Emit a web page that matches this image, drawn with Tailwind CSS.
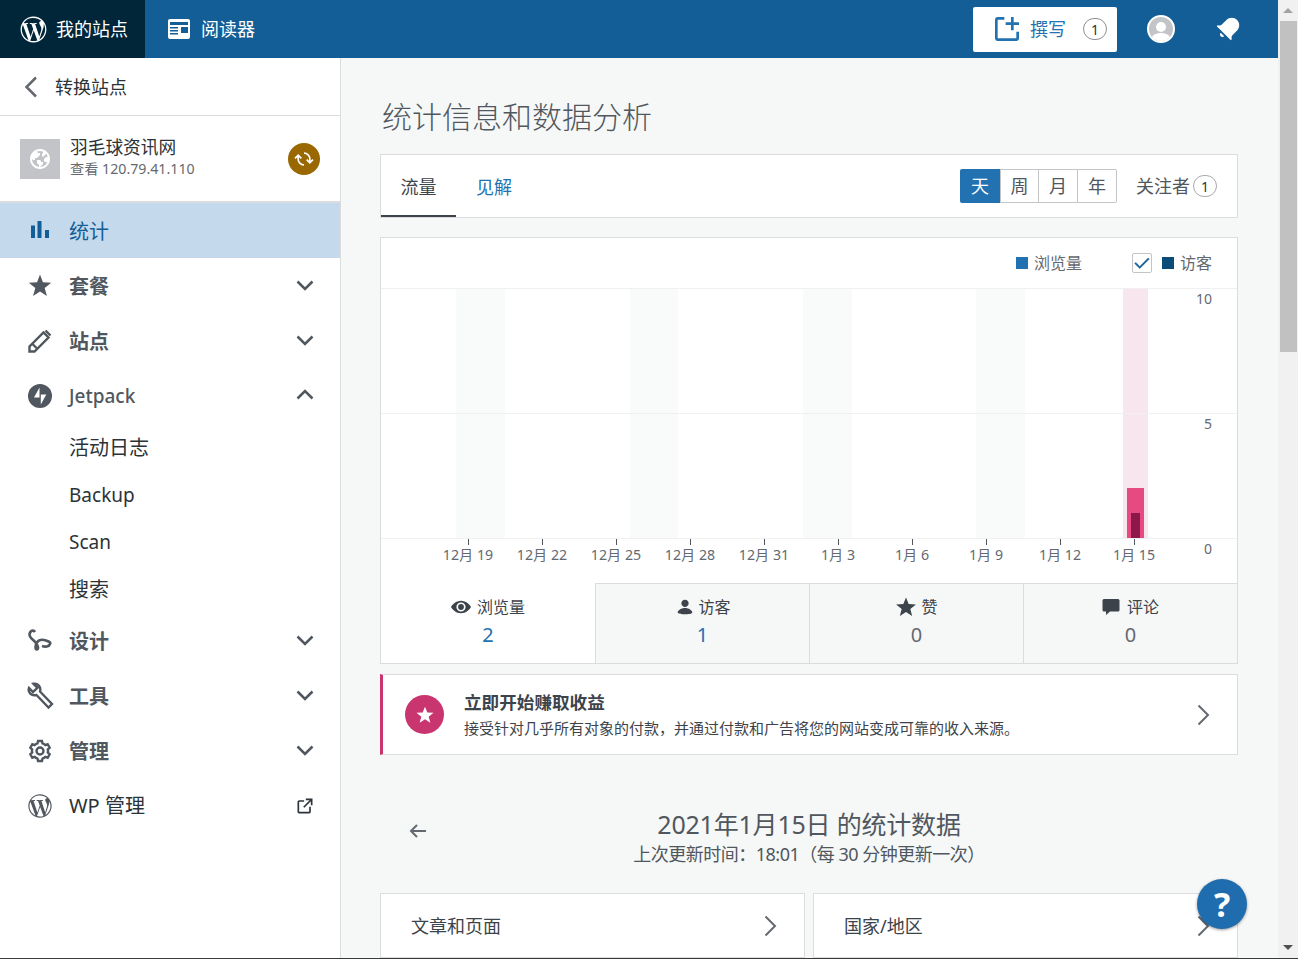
<!DOCTYPE html>
<html lang="zh">
<head>
    <meta charset="UTF-8">
    <title>统计信息和数据分析</title>
    <script src="https://cdn.jsdelivr.net/npm/@tailwindcss/browser@4"></script>
</head>
<body class="overflow-hidden bg-white">
<div class="relative flex h-[959px] w-[1298px] overflow-hidden border-b border-[#3a3a3a] font-['Noto_Sans','Noto_Sans_CJK_SC',sans-serif] text-[#2c3338]">
    <div class="flex w-[1278px] flex-col">
        <!-- Masterbar -->
        <header class="flex h-[58px] shrink-0 items-center bg-[#135e96] text-white">
            <div class="flex h-full w-[145px] items-center bg-[#01263a] pl-[18px] text-[18px]">
                <svg class="h-[31px] w-[31px] fill-white" viewBox="0 0 24 24"><path d="M12 2C6.477 2 2 6.477 2 12s4.477 10 10 10 10-4.477 10-10S17.523 2 12 2zM3.01 12c0-1.303.28-2.54.78-3.657l4.288 11.75C5.08 18.638 3.01 15.562 3.01 12zm8.99 8.99c-.883 0-1.735-.13-2.54-.366l2.698-7.84 2.763 7.57c.02.043.042.085.066.124-.934.328-1.94.51-2.987.51zm1.24-13.205c.54-.028 1.028-.085 1.028-.085.484-.058.427-.77-.057-.742 0 0-1.458.114-2.4.114-.885 0-2.37-.114-2.37-.114-.486-.028-.543.712-.058.74 0 0 .46.058.945.086l1.403 3.842-1.97 5.908-3.278-9.75c.543-.028 1.03-.085 1.03-.085.484-.058.427-.77-.058-.742 0 0-1.457.114-2.4.114-.17 0-.37-.004-.58-.01C6.2 3.96 8.947 3.01 12 3.01c2.34 0 4.472.895 6.07 2.36-.038-.002-.076-.007-.116-.007-.883 0-1.51.77-1.51 1.596 0 .74.428 1.368.883 2.108.343.6.743 1.37.743 2.482 0 .77-.298 1.666-.685 2.91l-.9 3.007-3.245-9.67zM16.52 19.73l2.75-7.95c.513-1.283.684-2.308.684-3.22 0-.33-.022-.637-.06-.924.703 1.283 1.105 2.755 1.105 4.322 0 3.33-1.803 6.237-4.482 7.772z"/></svg>
                <span class="ml-[7px]">我的站点</span>
            </div>
            <div class="flex h-full items-center pl-[23px] text-[18px]">
                <svg class="h-[20px] w-[22px]" viewBox="0 0 22 20"><rect width="22" height="20" rx="2" fill="#fff"/><rect x="2" y="3" width="18" height="3" fill="#135e96"/><rect x="2" y="8" width="8" height="1.5" fill="#135e96"/><rect x="2" y="11" width="8" height="1.5" fill="#135e96"/><rect x="2" y="14" width="8" height="1.5" fill="#135e96"/><rect x="13" y="8" width="7" height="6" fill="#135e96"/></svg>
                <span class="ml-[11px]">阅读器</span>
            </div>
            <div class="ml-auto flex h-[45px] w-[144px] items-center rounded-[2px] bg-white pl-[18px] text-[18px] text-[#2271b1]">
                <svg class="h-[32px] w-[32px] fill-[#2271b1]" viewBox="0 0 24 24"><path d="M21 14v5c0 1.105-.895 2-2 2H5c-1.105 0-2-.895-2-2V5c0-1.105.895-2 2-2h5v2H5v14h14v-5h2zM21 7h-4V3h-2v4h-4v2h4v4h2V9h4V7z"/></svg>
                <span class="ml-[7px]">撰写</span>
                <span class="ml-[17px] flex h-[22px] w-[24px] items-center justify-center rounded-full border border-[#8c8f94] text-[14px] text-[#2c3338]">1</span>
            </div>
            <div class="ml-[30px] flex h-[28px] w-[28px] items-end justify-center overflow-hidden rounded-full border-2 border-white bg-[#c3c4c7]">
                <svg class="h-[24px] w-[24px] fill-white" viewBox="0 0 24 24"><circle cx="12" cy="10" r="5"/><path d="M2 24c0-6 5-8 10-8s10 2 10 8z"/></svg>
            </div>
            <svg class="ml-[38px] mr-[35px] h-[30px] w-[30px] fill-white" viewBox="0 0 24 24"><path d="M6.14 14.97l2.828 2.827c-.362.362-.862.586-1.414.586-1.105 0-2-.895-2-2 0-.552.224-1.052.586-1.414zm8.867 5.324L14.3 21 3 9.7l.706-.707 1.102.157c.754.108 1.69-.122 2.077-.51l3.885-3.884c2.34-2.34 6.135-2.34 8.475 0s2.34 6.135 0 8.475l-3.885 3.886c-.388.388-.618 1.323-.51 2.077l.157 1.1z"/></svg>
        </header>

        <div class="flex min-h-0 flex-1">
            <!-- Sidebar -->
            <aside class="w-[341px] shrink-0 border-r border-[#dcdcde] bg-white">
                <div class="flex h-[58px] items-center border-b border-[#dcdcde] pl-[22px] text-[18px]">
                    <svg class="h-[22px] w-[20px] fill-none stroke-[#646970] stroke-[2.5]" viewBox="0 0 20 22"><path d="M14 1.5 4.500 11l9.500 9.500"/></svg>
                    <span class="ml-[13px] mt-[2px]">转换站点</span>
                </div>
                <div class="flex h-[87px] items-center border-b-2 border-[#dcdcde] pl-[20px] pr-[20px]">
                    <div class="flex h-[40px] w-[40px] items-center justify-center bg-[#c3c4c7]">
                        <svg class="h-[24px] w-[24px] fill-white" viewBox="0 0 24 24"><path d="M12 2C6.477 2 2 6.477 2 12s4.477 10 10 10 10-4.477 10-10S17.523 2 12 2zm0 18l2-2 1-1v-2h-2v-1l-1-1H9v3l2 2v1.93c-3.94-.494-7-3.858-7-7.93l1 1h2v-2h2l3-3V6h-2L9 5v-.41C9.927 4.21 10.94 4 12 4s2.073.212 3 .59V6l-1 1v2l1 1 3.13-3.13c.752.897 1.304 1.964 1.606 3.13H18l-2 2v2l1 1h2l.286.286C18.03 18.06 15.24 20 12 20z"/></svg>
                    </div>
                    <div class="ml-[10px] flex flex-col pb-[3px]">
                        <span class="text-[17.7px] leading-[24px]">羽毛球资讯网</span>
                        <span class="text-[14.2px] leading-[20px] text-[#646970]">查看 120.79.41.110</span>
                    </div>
                    <div class="ml-auto flex h-[32px] w-[32px] items-center justify-center rounded-full bg-[#996800]">
                        <svg class="h-[20px] w-[20px] fill-white" viewBox="0 0 24 24"><path d="M23.5 13.5l-3.086 3.086L19 18l-4.5-4.5 1.414-1.414L18 14.172V12c0-3.308-2.692-6-6-6V4c4.418 0 8 3.582 8 8v2.172l2.086-2.086L23.5 13.5zM6 12V9.828l2.086 2.086L9.5 10.5 5 6 3.586 7.414.5 10.5l1.414 1.414L4 9.828V12c0 4.418 3.582 8 8 8v-2c-3.308 0-6-2.692-6-6z"/></svg>
                    </div>
                </div>
                <nav class="text-[#50575e]">
                    <a class="flex h-[55px] items-center bg-[#c5d9ed] pl-[28px] text-[20px] text-[#135e96]">
                        <svg class="h-[24px] w-[24px] fill-[#135e96]" viewBox="0 0 24 24"><path d="M3 6.500h4V19H3zM9.500 2h4v17h-4zM17 11h4v8h-4z"/></svg>
                        <span class="ml-[17px] mt-[2px]">统计</span>
                    </a>
                    <a class="flex h-[55px] items-center pl-[28px] pr-[23px] text-[20px] font-bold">
                        <svg class="h-[24px] w-[24px] fill-[#50575e]" viewBox="0 0 24 24"><path d="M12 .5l2.900 7.800 8.300.4-6.500 5.200 2.200 8.100L12 17.400l-6.900 4.600 2.200-8.100L.8 8.700l8.300-.4z"/></svg>
                        <span class="ml-[17px] mt-[2px]">套餐</span>
                        <svg class="ml-auto h-[24px] w-[24px] fill-none stroke-[#50575e] stroke-[2.5]" viewBox="0 0 24 24"><path d="M4.500 7.500 12 15l7.500-7.500"/></svg>
                    </a>
                    <a class="flex h-[55px] items-center pl-[28px] pr-[23px] text-[20px] font-bold">
                        <svg class="h-[24px] w-[24px] fill-none stroke-[#50575e] stroke-[2.4]" viewBox="0 0 24 24"><path d="M1.500 22.500v-5L15.500 3.500l5 5-14 14zM17.500 1.500l5 5M4.500 15l4.500 4.500"/></svg>
                        <span class="ml-[17px] mt-[2px]">站点</span>
                        <svg class="ml-auto h-[24px] w-[24px] fill-none stroke-[#50575e] stroke-[2.5]" viewBox="0 0 24 24"><path d="M4.500 7.500 12 15l7.500-7.500"/></svg>
                    </a>
                    <a class="flex h-[55px] items-center pl-[28px] pr-[23px] text-[19px] font-medium">
                        <svg class="h-[24px] w-[24px]" viewBox="0 0 24 24"><circle cx="12" cy="12" r="12" fill="#50575e"/><path d="M11.500 3.500v10H6zM12.800 20.500v-10h5.500z" fill="#fff"/></svg>
                        <span class="ml-[17px] mt-[1px]">Jetpack</span>
                        <svg class="ml-auto h-[24px] w-[24px] fill-none stroke-[#50575e] stroke-[2.5]" viewBox="0 0 24 24"><path d="M4.500 14.500 12 7l7.500 7.500"/></svg>
                    </a>
                    <div class="pl-[69px] text-[20px] text-[#2c3338]">
                        <a class="flex h-[47.5px] items-center pt-[3px]">活动日志</a>
                        <a class="flex h-[47.5px] items-center pt-[2px] text-[19px]">Backup</a>
                        <a class="flex h-[47.5px] items-center text-[19px]">Scan</a>
                        <a class="flex h-[47.5px] items-center pt-[2px]">搜索</a>
                    </div>
                    <a class="flex h-[55px] items-center pl-[28px] pr-[23px] text-[20px] font-bold">
                        <svg class="h-[24px] w-[24px] fill-none stroke-[#50575e] stroke-[2.6]" viewBox="0 0 24 24"><path d="M7 3C5.500.5 2 1.500 1.500 5.500c0 3.500 4.500 5.500 6.500 8.500 2 3 3 6 1 6.500-2 0-2-4.500 0-7 2-3 6-3 9-2 3 1 5 1.500 4 3.500-1 3-5 3-8 2"/></svg>
                        <span class="ml-[17px] mt-[2px]">设计</span>
                        <svg class="ml-auto h-[24px] w-[24px] fill-none stroke-[#50575e] stroke-[2.5]" viewBox="0 0 24 24"><path d="M4.500 7.500 12 15l7.500-7.500"/></svg>
                    </a>
                    <a class="flex h-[55px] items-center pl-[26px] pr-[23px] text-[20px] font-bold">
                        <svg class="h-[28px] w-[28px] fill-none stroke-[#50575e] stroke-[2.4]" viewBox="0 0 28 28"><path d="M7.500 1.800l4 4L7 10 3 6c-1.500 4 2.500 8.500 7.500 7l12 12.500L26 22 14 9.500c1.500-5-2.500-8.500-6.500-7.700z"/></svg>
                        <span class="ml-[15px] mt-[2px]">工具</span>
                        <svg class="ml-auto h-[24px] w-[24px] fill-none stroke-[#50575e] stroke-[2.5]" viewBox="0 0 24 24"><path d="M4.500 7.500 12 15l7.500-7.500"/></svg>
                    </a>
                    <a class="flex h-[55px] items-center pl-[28px] pr-[23px] text-[20px] font-bold">
                        <svg class="h-[24px] w-[24px] fill-none stroke-[#50575e] stroke-[2.4]" viewBox="0 0 24 24"><circle cx="12" cy="12" r="3.5"/><path d="M20 12c0-.568-.06-1.122-.174-1.656l1.834-1.612-2-3.464-2.322.786c-.82-.736-1.787-1.308-2.86-1.657L14 2h-4l-.48 2.396c-1.07.35-2.04.92-2.858 1.657L4.340 5.268l-2 3.464 1.834 1.612C4.060 10.878 4 11.432 4 12s.06 1.122.174 1.656L2.340 15.268l2 3.464 2.322-.786c.82.736 1.787 1.308 2.86 1.657L10 22h4l.48-2.396c1.07-.35 2.04-.92 2.858-1.657l2.322.786 2-3.464-1.834-1.613c.113-.535.174-1.09.174-1.657z"/></svg>
                        <span class="ml-[17px] mt-[2px]">管理</span>
                        <svg class="ml-auto h-[24px] w-[24px] fill-none stroke-[#50575e] stroke-[2.5]" viewBox="0 0 24 24"><path d="M4.500 7.500 12 15l7.500-7.500"/></svg>
                    </a>
                    <a class="flex h-[55px] items-center pl-[26px] pr-[25px] text-[20px] text-[#2c3338]">
                        <svg class="h-[28px] w-[28px] fill-[#50575e]" viewBox="0 0 24 24"><path d="M12 2C6.477 2 2 6.477 2 12s4.477 10 10 10 10-4.477 10-10S17.523 2 12 2zM3.010 12c0-1.303.28-2.54.78-3.657l4.288 11.750C5.080 18.638 3.010 15.562 3.010 12zm8.990 8.990c-.883 0-1.735-.13-2.540-.366l2.698-7.840 2.763 7.570c.02.043.042.085.066.124-.934.328-1.940.51-2.987.51zm1.240-13.205c.54-.028 1.028-.085 1.028-.085.484-.058.427-.77-.057-.742 0 0-1.458.114-2.400.114-.885 0-2.370-.114-2.370-.114-.486-.028-.543.712-.058.74 0 0 .46.058.945.086l1.403 3.842-1.970 5.908-3.278-9.750c.543-.028 1.030-.085 1.030-.085.484-.058.427-.77-.058-.742 0 0-1.457.114-2.400.114-.17 0-.37-.004-.58-.01C6.200 3.960 8.947 3.010 12 3.010c2.340 0 4.472.895 6.070 2.360-.038-.002-.076-.007-.116-.007-.883 0-1.510.77-1.510 1.596 0 .74.428 1.368.883 2.108.343.6.743 1.370.743 2.482 0 .77-.298 1.666-.685 2.910l-.9 3.007-3.245-9.670zM16.520 19.730l2.750-7.950c.513-1.283.684-2.308.684-3.220 0-.33-.022-.637-.06-.924.703 1.283 1.105 2.755 1.105 4.322 0 3.330-1.803 6.237-4.482 7.772z"/></svg>
                        <span class="ml-[15px] mt-[1px]">WP 管理</span>
                        <svg class="ml-auto h-[20px] w-[20px] fill-[#2c3338]" viewBox="0 0 24 24"><path d="M19 13v6c0 1.105-.895 2-2 2H5c-1.105 0-2-.895-2-2V7c0-1.105.895-2 2-2h6v2H5v12h12v-6h2zM13 3v2h4.586l-7.793 7.793 1.414 1.414L19 6.414V11h2V3h-8z"/></svg>
                    </a>
                </nav>
            </aside>

            <!-- Main -->
            <main class="flex min-w-0 flex-1 flex-col overflow-hidden bg-[#f6f7f7] pl-[39px] pr-[40px]">
                <h1 class="mt-[37px] h-[44px] shrink-0 pl-[2px] text-[30px] leading-[44px] font-light text-[#50575e]">统计信息和数据分析</h1>

                <!-- Tabs -->
                <div class="mt-[15px] flex h-[64px] shrink-0 items-stretch border border-[#dcdcde] bg-white">
                    <a class="flex w-[75px] items-center justify-center border-b-2 border-[#3c434a] pt-[4px] text-[18px] text-[#3c434a]">流量</a>
                    <a class="ml-[20px] flex items-center pt-[2px] text-[18px] text-[#2271b1]">见解</a>
                    <div class="ml-auto flex items-center pr-[20px]">
                        <div class="flex h-[34px] text-[18px] text-[#50575e]">
                            <span class="flex w-[40px] items-center justify-center rounded-l-[2px] bg-[#2271b1] pt-[1px] text-white">天</span>
                            <span class="flex w-[38px] items-center justify-center border-y border-l border-[#c3c4c7] bg-white pt-[1px]">周</span>
                            <span class="flex w-[39px] items-center justify-center border-y border-l border-[#c3c4c7] bg-white pt-[1px]">月</span>
                            <span class="flex w-[40px] items-center justify-center rounded-r-[2px] border border-[#c3c4c7] bg-white pt-[1px]">年</span>
                        </div>
                        <span class="ml-[19px] text-[18px] text-[#50575e]">关注者</span>
                        <span class="ml-[3px] flex h-[22px] w-[24px] items-center justify-center rounded-full border border-[#a7aaad] text-[14px]">1</span>
                    </div>
                </div>

                <!-- Chart card -->
                <div class="mt-[19px] shrink-0 border border-[#dcdcde] bg-white">
                    <div class="flex h-[50px] items-center justify-end pr-[25px] text-[16px] text-[#646970]">
                        <span class="h-[12px] w-[12px] bg-[#2271b1]"></span>
                        <span class="ml-[6px]">浏览量</span>
                        <span class="ml-[50px] flex h-[20px] w-[20px] items-center justify-center rounded-[2px] border border-[#c3c4c7]">
                            <svg class="h-[18px] w-[18px] fill-[#135e96] stroke-[#135e96] stroke-[0.7]" viewBox="0 0 24 24"><path d="M9 19.414l-6.707-6.707 1.414-1.414L9 16.586 20.293 5.293l1.414 1.414z"/></svg>
                        </span>
                        <span class="ml-[10px] h-[12px] w-[12px] bg-[#0a4b78]"></span>
                        <span class="ml-[6px]">访客</span>
                    </div>
                    <div class="relative flex h-[295px]">
                        <div class="absolute inset-x-0 top-0 h-px bg-[#f0f0f1]"></div>
                        <div class="absolute inset-x-0 top-[125px] h-px bg-[#f0f0f1]"></div>
                        <div class="absolute inset-x-0 top-[250px] h-px bg-[#f0f0f1]"></div>
                        <div class="w-[767px]">
                            <div class="flex h-[250px]">
                                <div class="w-[75px]"></div>
                                <div class="w-[49px] bg-[#f9fafa]"></div>
                                <div class="w-[125px]"></div>
                                <div class="w-[48px] bg-[#f9fafa]"></div>
                                <div class="w-[125px]"></div>
                                <div class="w-[49px] bg-[#f9fafa]"></div>
                                <div class="w-[124px]"></div>
                                <div class="w-[49px] bg-[#f9fafa]"></div>
                                <div class="w-[98px]"></div>
                                <div class="flex w-[25px] items-end justify-center bg-[#f7e6ee]">
                                    <div class="flex h-[50px] w-[17px] items-end justify-center bg-[#e54a80]">
                                        <div class="h-[25px] w-[9px] bg-[#8c1749]"></div>
                                    </div>
                                </div>
                            </div>
                            <div class="flex pl-[50px] text-[14.2px] text-[#646970]">
                                <div class="flex w-[74px] shrink-0 flex-col items-center"><span class="h-[7px] w-px bg-[#50575e]"></span><span class="whitespace-nowrap leading-[20px]">12月 19</span></div>
                                <div class="flex w-[74px] shrink-0 flex-col items-center"><span class="h-[7px] w-px bg-[#50575e]"></span><span class="whitespace-nowrap leading-[20px]">12月 22</span></div>
                                <div class="flex w-[74px] shrink-0 flex-col items-center"><span class="h-[7px] w-px bg-[#50575e]"></span><span class="whitespace-nowrap leading-[20px]">12月 25</span></div>
                                <div class="flex w-[74px] shrink-0 flex-col items-center"><span class="h-[7px] w-px bg-[#50575e]"></span><span class="whitespace-nowrap leading-[20px]">12月 28</span></div>
                                <div class="flex w-[74px] shrink-0 flex-col items-center"><span class="h-[7px] w-px bg-[#50575e]"></span><span class="whitespace-nowrap leading-[20px]">12月 31</span></div>
                                <div class="flex w-[74px] shrink-0 flex-col items-center"><span class="h-[7px] w-px bg-[#50575e]"></span><span class="whitespace-nowrap leading-[20px]">1月 3</span></div>
                                <div class="flex w-[74px] shrink-0 flex-col items-center"><span class="h-[7px] w-px bg-[#50575e]"></span><span class="whitespace-nowrap leading-[20px]">1月 6</span></div>
                                <div class="flex w-[74px] shrink-0 flex-col items-center"><span class="h-[7px] w-px bg-[#50575e]"></span><span class="whitespace-nowrap leading-[20px]">1月 9</span></div>
                                <div class="flex w-[74px] shrink-0 flex-col items-center"><span class="h-[7px] w-px bg-[#50575e]"></span><span class="whitespace-nowrap leading-[20px]">1月 12</span></div>
                                <div class="flex w-[74px] shrink-0 flex-col items-center"><span class="h-[7px] w-px bg-[#50575e]"></span><span class="whitespace-nowrap leading-[20px]">1月 15</span></div>
                            </div>
                        </div>
                        <div class="flex-1 pr-[25px] text-right text-[14px] leading-[22px] text-[#646970]">
                            <div class="h-[125px]">10</div>
                            <div class="h-[125px]">5</div>
                            <div class="h-[45px]">0</div>
                        </div>
                    </div>
                    <!-- Tab stats -->
                    <div class="flex h-[80px]">
                        <div class="flex w-[214px] flex-col items-center pt-[13px]">
                            <div class="flex h-[22px] items-center text-[16px] text-[#3c434a]">
                                <svg class="h-[20px] w-[20px] fill-[#3c434a]" viewBox="0 0 24 24"><path d="M12 4.500C6 4.500 1.500 9 0 12c1.500 3 6 7.500 12 7.500S22.500 15 24 12c-1.500-3-6-7.500-12-7.500zm0 13a5.500 5.500 0 1 1 0-11 5.500 5.500 0 0 1 0 11zM12 8.500a3.500 3.500 0 1 0 0 7 3.500 3.500 0 0 0 0-7z"/></svg>
                                <span class="ml-[6px]">浏览量</span>
                            </div>
                            <span class="mt-[3px] text-[20px] leading-[28px] text-[#2271b1]">2</span>
                        </div>
                        <div class="flex w-[214px] flex-col items-center border-t border-l border-[#dcdcde] bg-[#f6f7f7] pt-[12px]">
                            <div class="flex h-[22px] items-center text-[16px] text-[#3c434a]">
                                <svg class="h-[22px] w-[22px] fill-[#3c434a]" viewBox="0 0 24 24"><path d="M12 4c2.210 0 4 1.790 4 4s-1.790 4-4 4-4-1.790-4-4 1.790-4 4-4zm0 16s8 0 8-2c0-2.400-3.900-5-8-5s-8 2.600-8 5c0 2 8 2 8 2z"/></svg>
                                <span class="ml-[2px]">访客</span>
                            </div>
                            <span class="mt-[3px] text-[20px] leading-[28px] text-[#2271b1]">1</span>
                        </div>
                        <div class="flex w-[214px] flex-col items-center border-t border-l border-[#dcdcde] bg-[#f6f7f7] pt-[12px]">
                            <div class="flex h-[22px] items-center text-[16px] text-[#3c434a]">
                                <svg class="h-[22px] w-[22px] fill-[#3c434a]" viewBox="0 0 24 24"><path d="M12 1.500l2.900 7.300 7.900.4-6.100 5 2 7.600-6.700-4.300-6.700 4.300 2-7.600-6.100-5 7.900-.4z"/></svg>
                                <span class="ml-[4px]">赞</span>
                            </div>
                            <span class="mt-[3px] text-[20px] leading-[28px] text-[#646970]">0</span>
                        </div>
                        <div class="flex flex-1 flex-col items-center border-t border-l border-[#dcdcde] bg-[#f6f7f7] pt-[12px]">
                            <div class="flex h-[22px] items-center text-[16px] text-[#3c434a]">
                                <svg class="h-[18px] w-[18px] fill-[#3c434a]" viewBox="0 0 18 18"><path d="M2 1h14a1.500 1.500 0 0 1 1.500 1.500v9.500a1.500 1.500 0 0 1-1.500 1.500H8L4 17v-3.500H2A1.500 1.500 0 0 1 .5 12V2.500A1.500 1.500 0 0 1 2 1z"/></svg>
                                <span class="ml-[7px]">评论</span>
                            </div>
                            <span class="mt-[3px] text-[20px] leading-[28px] text-[#646970]">0</span>
                        </div>
                    </div>
                </div>

                <!-- Promo -->
                <div class="mt-[10px] flex h-[81px] shrink-0 items-center border-y border-r border-l-[3px] border-y-[#dcdcde] border-r-[#dcdcde] border-l-[#c9356e] bg-white pl-[22px] pr-[22px]">
                    <div class="flex h-[39px] w-[39px] shrink-0 items-center justify-center rounded-full bg-[#c9356e]">
                        <svg class="h-[20px] w-[20px] fill-white" viewBox="0 0 24 24"><path d="M12 2l2.800 7 7.400.3-5.800 4.700 2 7.200-6.400-4.100-6.400 4.100 2-7.200L1.800 9.300 9.200 9z"/></svg>
                    </div>
                    <div class="ml-[20px] pb-[2px]">
                        <div class="text-[17.6px] leading-[24px] font-bold text-[#3c434a]">立即开始赚取收益</div>
                        <div class="mt-[4px] text-[15px] leading-[20px] text-[#3c434a]">接受针对几乎所有对象的付款，并通过付款和广告将您的网站变成可靠的收入来源。</div>
                    </div>
                    <svg class="ml-auto h-[24px] w-[24px] fill-none stroke-[#646970] stroke-2" viewBox="0 0 24 24"><path d="M7.500 2.500 17 12l-9.500 9.500"/></svg>
                </div>

                <!-- Date heading -->
                <div class="relative mt-[51px] flex shrink-0 flex-col items-center">
                    <svg class="absolute left-[26px] top-[13px] h-[24px] w-[24px] fill-[#646970]" viewBox="0 0 24 24"><path d="M20 11H7.414l4.293-4.293-1.414-1.414L3.586 12l6.707 6.707 1.414-1.414L7.414 13H20z"/></svg>
                    <div class="text-[25px] leading-[36px] tracking-[-0.2px] text-[#50575e]">2021年1月15日 的统计数据</div>
                    <div class="text-[18px] leading-[25px] tracking-[-0.5px] text-[#50575e]">上次更新时间：18:01（每 30 分钟更新一次）</div>
                </div>

                <!-- Module cards -->
                <div class="mt-[26px] flex shrink-0 gap-[8px]">
                    <div class="flex h-[65px] flex-1 items-center border border-[#dcdcde] bg-white pl-[30px] pr-[22px] pt-[2px] text-[18px] text-[#3c434a]">
                        <span>文章和页面</span>
                        <svg class="ml-auto h-[24px] w-[24px] fill-none stroke-[#646970] stroke-2" viewBox="0 0 24 24"><path d="M7.500 1.500 17 11l-9.500 9.500"/></svg>
                    </div>
                    <div class="flex h-[65px] flex-1 items-center border border-[#dcdcde] bg-white pl-[30px] pr-[22px] pt-[2px] text-[18px] text-[#3c434a]">
                        <span>国家/地区</span>
                        <svg class="ml-auto h-[24px] w-[24px] fill-none stroke-[#646970] stroke-2" viewBox="0 0 24 24"><path d="M7.500 1.500 17 11l-9.500 9.500"/></svg>
                    </div>
                </div>
            </main>
        </div>
    </div>

    <!-- Scrollbar -->
    <div class="flex h-full w-[20px] flex-col items-center bg-[#f1f1f1]">
        <div class="mt-[8px] h-0 w-0 border-x-[5px] border-b-[5px] border-x-transparent border-b-[#a3a3a3]"></div>
        <div class="mt-[8px] h-[331px] w-[17px] bg-[#c1c1c1]"></div>
        <div class="mt-auto mb-[8px] h-0 w-0 border-x-[5px] border-t-[5px] border-x-transparent border-t-[#505050]"></div>
    </div>

    <!-- Help -->
    <div class="absolute left-[1197px] top-[879px] flex h-[50px] w-[50px] items-center justify-center rounded-full bg-[#1f6cae] text-[34px] font-bold text-white shadow-[0_1px_3px_rgba(0,0,0,0.4)]">?</div>
</div>
</body>
</html>
